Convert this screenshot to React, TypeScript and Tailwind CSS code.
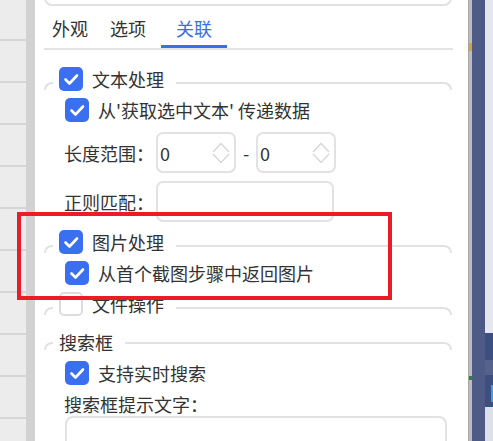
import React from 'react';

const BORDER = 'border-[#e2e2e2]';

const CheckBox: React.FC<{ checked?: boolean }> = ({ checked = true }) =>
  checked ? (
    <div className="flex h-[24px] w-[24px] shrink-0 items-center justify-center rounded-[5px] bg-[#3a6ff0]">
      <svg width="24" height="24" viewBox="0 0 24 24" fill="none">
        <polyline points="6.5,12.5 10.5,16.5 18,8.5" stroke="white" strokeWidth="2.6" strokeLinecap="round" strokeLinejoin="round" />
      </svg>
    </div>
  ) : (
    <div className="h-[24px] w-[24px] shrink-0 rounded-[5px] border-2 border-[#dcdcdc] bg-white" />
  );

// group title: checkbox + label sitting on the group's top border
const GroupTitle: React.FC<{ label: string; checked?: boolean; plain?: boolean; className?: string }> = ({
  label,
  checked = true,
  plain = false,
  className = '',
}) => (
  <div className={`ml-[9px] flex w-[408px] shrink-0 items-start ${plain ? 'h-[26px]' : 'h-[24px]'} ${className}`}>
    <div className={`${plain ? 'mt-[13px]' : 'mt-[16px]'} h-[8px] w-[9px] shrink-0 rounded-tl-[8px] border-l-2 border-t-2 ${BORDER}`} />
    <div className="ml-[6px] flex items-center">
      {!plain && <CheckBox checked={checked} />}
      <span className={`${plain ? '' : 'ml-[9px]'} whitespace-nowrap text-[18px] leading-[26px] text-[#333]`}>{label}</span>
    </div>
    <div className={`ml-[12px] ${plain ? 'mt-[13px]' : 'mt-[16px]'} h-[8px] flex-1 rounded-tr-[8px] border-r-2 border-t-2 ${BORDER}`} />
  </div>
);

const CheckRow: React.FC<{ label: string; className?: string }> = ({ label, className = '' }) => (
  <div className={`ml-[30px] flex h-[24px] shrink-0 items-center ${className}`}>
    <CheckBox />
    <span className="ml-[9px] whitespace-nowrap text-[18px] leading-[26px] text-[#333]">{label}</span>
  </div>
);

const SpinBox: React.FC<{ value: string }> = ({ value }) => (
  <div className={`flex h-[41px] w-[80px] items-center justify-between rounded-[7px] border-2 ${BORDER} pl-[2px] pr-[4px]`}>
    <span className="text-[18px] leading-[26px] text-[#333]">{value}</span>
    <svg width="18" height="22" viewBox="0 0 18 22" fill="none" stroke="#d6d6d6" strokeWidth="1.3">
      <polyline points="1,10 9,1.5 17,10" />
      <polyline points="1,12 9,20.5 17,12" />
    </svg>
  </div>
);

export default function App() {
  return (
    <div className="relative flex h-[441px] w-[493px] overflow-hidden bg-white font-['Noto_Sans_CJK_SC',sans-serif]">
      {/* left neighbour list */}
      <div className="flex w-[26px] shrink-0 flex-col bg-[#ececec]">
        <div className="h-[41px] shrink-0 border-b-2 border-[#d6d6d6]" />
        {Array.from({ length: 10 }).map((_, i) => (
          <div key={i} className="h-[42px] shrink-0 border-b-2 border-[#d6d6d6]" />
        ))}
      </div>
      <div className="w-[9px] shrink-0 bg-[#d2d2d2]" />

      {/* settings panel */}
      <div className="flex w-[433px] shrink-0 flex-col overflow-hidden bg-white">
        <div className={`-mt-[34px] ml-[9px] h-[40px] w-[408px] shrink-0 rounded-[8px] border-2 ${BORDER}`} />

        <div className="flex h-[42px] shrink-0 text-[18px] leading-[26px]">
          <span className="ml-[17px] w-[36px] pt-[9px] text-[#333]">外观</span>
          <span className="ml-[22px] w-[36px] pt-[9px] text-[#333]">选项</span>
          <div className="ml-[15px] flex w-[66px] flex-col items-center justify-between">
            <span className="pt-[9px] text-[#3b6fe6]">关联</span>
            <div className="h-[3px] w-full bg-[#3b6fe6]" />
          </div>
        </div>
        <div className="ml-[9px] h-[2px] w-[409px] shrink-0 bg-[#e3e3e3]" />

        {/* 文本处理 */}
        <GroupTitle label="文本处理" className="mt-[16px]" />
        <CheckRow label="从'获取选中文本' 传递数据" className="mt-[8px]" />

        <div className="ml-[29px] mt-[10px] flex h-[41px] shrink-0 items-center">
          <span className="w-[92px] text-[18px] leading-[26px] text-[#333]">长度范围：</span>
          <SpinBox value="0" />
          <span className="w-[20px] text-center text-[18px] leading-[26px] text-[#333]">-</span>
          <SpinBox value="0" />
        </div>

        <div className="ml-[29px] mt-[8px] flex h-[41px] shrink-0 items-center">
          <span className="w-[92px] text-[18px] leading-[26px] text-[#333]">正则匹配：</span>
          <div className={`h-[41px] w-[178px] rounded-[7px] border-2 ${BORDER}`} />
        </div>

        {/* 图片处理 */}
        <GroupTitle label="图片处理" className="mt-[7px]" />
        <CheckRow label="从首个截图步骤中返回图片" className="mt-[8px]" />

        {/* 文件操作 */}
        <GroupTitle label="文件操作" checked={false} className="mt-[6px]" />

        {/* 搜索框 */}
        <GroupTitle label="搜索框" plain className="mt-[14px]" />
        <CheckRow label="支持实时搜索" className="mt-[6px]" />
        <span className="ml-[29px] mt-[7px] text-[18px] leading-[24px] text-[#333]">搜索框提示文字：</span>
        <div className={`ml-[30px] h-[40px] w-[382px] shrink-0 rounded-[8px] border-2 ${BORDER}`} />
      </div>

      {/* splitter */}
      <div className="flex w-[4px] shrink-0 flex-col border-l border-[#a6a6a6] bg-[#bcbcbc]">
        <div className="mt-[43px] h-[8px] bg-[#e5a11e]" />
        <div className="mt-[325px] h-[4px] bg-[#17941a]" />
      </div>
      <div className="w-[13px] shrink-0 bg-[#4f5b87]" />
      <div className="flex w-[8px] shrink-0 flex-col bg-[#e5e6ee]">
        <div className="mt-[333px] h-[27px] bg-[#3d4f80]" />
        <div className="h-[15px] bg-[#56618c]" />
        <div className="flex h-[32px] justify-end bg-[#3d4f80]">
          <div className="mt-[10px] h-[17px] w-[2px] bg-[#3aa0ec]" />
        </div>
        <div className="flex-1 bg-[#dde0ea]" />
      </div>

      {/* red highlight annotation */}
      <div className="pointer-events-none absolute left-[17px] top-[212px] h-[88px] w-[375px] border-[4px] border-[#ec1c24]" />
    </div>
  );
}
